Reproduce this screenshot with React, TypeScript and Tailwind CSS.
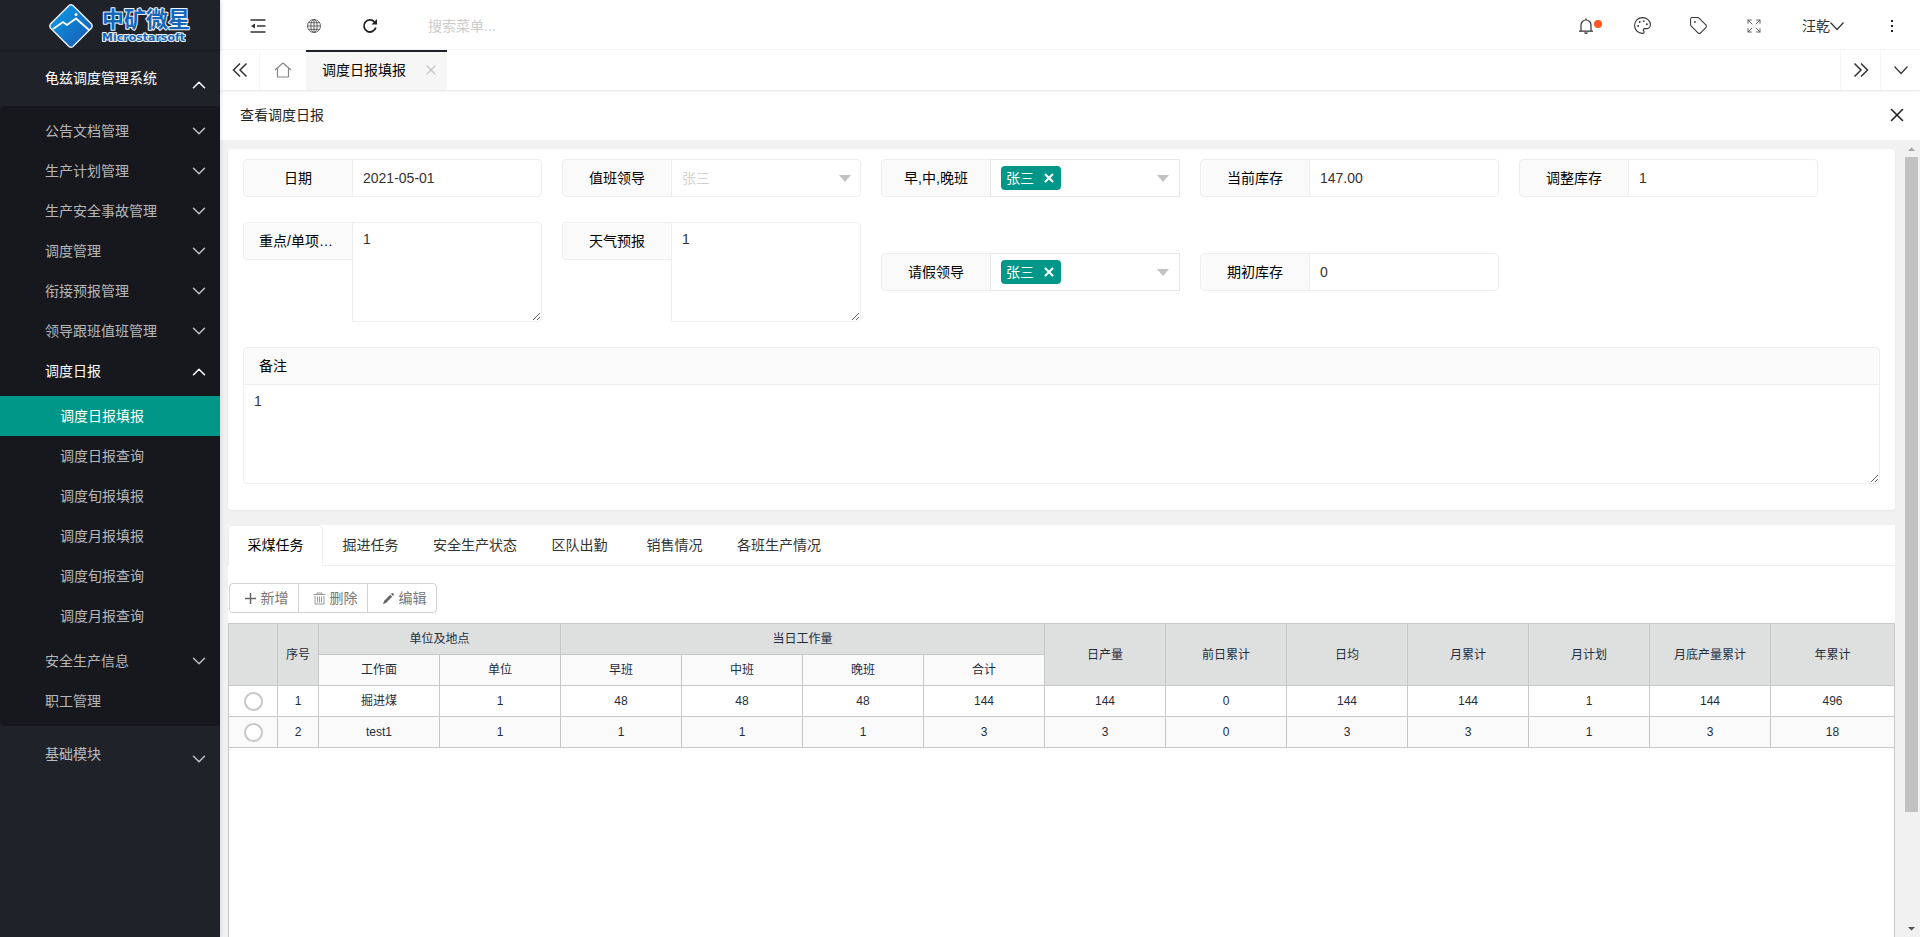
import { useState } from 'react'
import type { ReactNode } from 'react'
import { ChevronDown, ChevronUp, Expand, Palette, Tag, X } from 'lucide-react'

interface MenuItem {
  name: string
  arrow?: boolean
  children?: string[]
}

const MENU: MenuItem[] = [
  { name: '公告文档管理', arrow: true },
  { name: '生产计划管理', arrow: true },
  { name: '生产安全事故管理', arrow: true },
  { name: '调度管理', arrow: true },
  { name: '衔接预报管理', arrow: true },
  { name: '领导跟班值班管理', arrow: true },
  {
    name: '调度日报',
    arrow: true,
    children: [
      '调度日报填报',
      '调度日报查询',
      '调度旬报填报',
      '调度月报填报',
      '调度旬报查询',
      '调度月报查询',
    ],
  },
  { name: '安全生产信息', arrow: true },
  { name: '职工管理' },
]

const TABS = ['采煤任务', '掘进任务', '安全生产状态', '区队出勤', '销售情况', '各班生产情况']

const SUB_HEADS = ['工作面', '单位', '早班', '中班', '晚班', '合计']
const TALL_HEADS = ['日产量', '前日累计', '日均', '月累计', '月计划', '月底产量累计', '年累计']

const ROWS = [
  ['掘进煤', '1', '48', '48', '48', '144', '144', '0', '144', '144', '1', '144', '496'],
  ['test1', '1', '1', '1', '1', '3', '3', '0', '3', '3', '1', '3', '18'],
]

function Logo() {
  return (
    <svg width="150" height="48" viewBox="0 0 150 48" role="img" aria-label="中矿微星">
      <defs>
        <linearGradient id="logoFill" x1="0" y1="0" x2="1" y2="1">
          <stop offset="0" stopColor="#08a0ea" />
          <stop offset="1" stopColor="#1b55b0" />
        </linearGradient>
      </defs>
      <path
        d="M24 4.5 Q26 3 28 4.5 L46.5 23 Q48 25 46.5 27 L28 45.5 Q26 47 24 45.5 L5.5 27 Q4 25 5.5 23 Z"
        fill="url(#logoFill)"
        stroke="#e8eef5"
        strokeWidth="1.5"
      />
      <path
        d="M8 28 L18 21 L22 24 L31 17.500 L44 29"
        fill="none"
        stroke="#fff"
        strokeWidth="1.8"
      />
      <circle cx="31" cy="13.5" r="1.5" fill="#fff" />
      <text
        x="57"
        y="26"
        fontSize="22"
        fontWeight="700"
        fill="#1565b8"
        stroke="#f2f6fa"
        strokeWidth="2"
        strokeLinejoin="round"
        paintOrder="stroke"
        fontFamily="'Noto Sans CJK SC', sans-serif"
      >
        中矿微星
      </text>
      <text
        x="57"
        y="40"
        fontSize="11"
        fontWeight="700"
        fill="#1565b8"
        stroke="#f2f6fa"
        strokeWidth="2"
        strokeLinejoin="round"
        paintOrder="stroke"
        fontFamily="'DejaVu Sans', sans-serif"
      >
        Microstarsoft
      </text>
    </svg>
  )
}

function ShrinkIcon() {
  return (
    <svg width="16" height="16" viewBox="0 0 16 16" fill="none" stroke="#333" strokeWidth="1.5">
      <path d="M0.5 2H15.5M7 8H15.5M0.5 14H15.5" />
      <path d="M1 8L5 5.5V10.5Z" fill="#333" stroke="none" />
    </svg>
  )
}

function GlobeIcon() {
  return (
    <svg width="16" height="16" viewBox="0 0 16 16" fill="none" stroke="#555" strokeWidth="0.9">
      <circle cx="8" cy="8" r="6.5" />
      <ellipse cx="8" cy="8" rx="3.2" ry="6.5" />
      <path d="M8 1.5V14.5M1.5 8H14.5M2.5 4.7H13.5M2.5 11.3H13.5" />
    </svg>
  )
}

function ReloadIcon() {
  return (
    <svg width="16" height="16" viewBox="0 0 16 16" fill="none" stroke="#222" strokeWidth="1.8">
      <path d="M13.8 9.5A6 6 0 1 1 12.5 4" />
      <path d="M15 1V6.5H9.5Z" fill="#222" stroke="none" />
    </svg>
  )
}

function BellIcon() {
  return (
    <svg width="16" height="16" viewBox="0 0 16 16" fill="none" stroke="#333" strokeWidth="1.2">
      <path d="M3 13V7A5 5 0 0 1 13 7V13" />
      <path d="M1 13.2H15M6.5 14.5Q8 16 9.5 14.5M8 2V0.5" />
    </svg>
  )
}

function HomeIcon() {
  return (
    <svg width="18" height="18" viewBox="0 0 18 18" fill="none" stroke="#888" strokeWidth="1.2">
      <path d="M1 9L9 2L17 9M3.5 7.5V16H14.5V7.5" strokeLinejoin="round" />
    </svg>
  )
}

function DoubleArrow({ dir }: { dir: 'left' | 'right' }) {
  return (
    <svg width="16" height="16" viewBox="0 0 16 16" fill="none" stroke="#333" strokeWidth="1.5">
      {dir === 'left' ? (
        <path d="M8 1.5L1.5 8L8 14.5M14.5 1.5L8 8L14.5 14.5" />
      ) : (
        <path d="M1.5 1.5L8 8L1.5 14.5M8 1.5L14.5 8L8 14.5" />
      )}
    </svg>
  )
}

function WideArrow() {
  return (
    <svg width="14" height="14" viewBox="0 0 14 14" fill="none" stroke="#333" strokeWidth="1.2">
      <path d="M0.5 3.5L7 10.5L13.5 3.5" />
    </svg>
  )
}

function Caret() {
  return (
    <svg
      className="pointer-events-none shrink-0"
      width="12"
      height="7"
      viewBox="0 0 12 7"
      fill="#c2c2c2"
    >
      <path d="M0 0H12L6 7Z" />
    </svg>
  )
}

function Sidebar() {
  const [active, setActive] = useState('调度日报填报')

  return (
    <nav className="relative z-10 flex w-[220px] shrink-0 flex-col bg-[#20222a] text-white/70 shadow-[1px_0_4px_rgba(0,0,0,0.1)]">
      <div className="flex h-[50px] items-center pl-[45px] shadow-[0_1px_2px_rgba(0,0,0,0.15)]">
        <Logo />
      </div>
      <button className="flex h-14 items-center justify-between pr-2.5 pl-[45px] text-white">
        龟兹调度管理系统
        <ChevronUp size={22} strokeWidth={1.7} className="mt-3.5" />
      </button>
      <ul className="rounded-sm bg-[#16181d] py-[5px]">
        {MENU.map((item) => (
          <li key={item.name}>
            <button
              className={`flex h-10 w-full items-center justify-between pr-2.5 pl-[45px] ${
                item.children ? 'text-white' : ''
              }`}
            >
              {item.name}
              {item.arrow &&
                (item.children ? (
                  <ChevronUp size={22} strokeWidth={1.7} className="mt-0.5" />
                ) : (
                  <ChevronDown size={22} strokeWidth={1.7} />
                ))}
            </button>
            {item.children && (
              <ul className="py-[5px]">
                {item.children.map((child) => (
                  <li key={child}>
                    <a
                      href="#"
                      onClick={() => setActive(child)}
                      className={`flex h-10 items-center pl-[60px] ${
                        child === active ? 'bg-[#009688] text-white' : ''
                      }`}
                    >
                      {child}
                    </a>
                  </li>
                ))}
              </ul>
            )}
          </li>
        ))}
      </ul>
      <button className="flex h-14 items-center justify-between pr-2.5 pl-[45px]">
        基础模块
        <ChevronDown size={22} strokeWidth={1.7} className="mt-2.5" />
      </button>
    </nav>
  )
}

function TopButton({ label, children }: { label: string; children: ReactNode }) {
  return (
    <button aria-label={label} className="flex h-full w-14 items-center justify-center text-[#333]">
      {children}
    </button>
  )
}

function Header() {
  return (
    <header className="flex h-[50px] items-center justify-between border-b border-[#f6f6f6] bg-white">
      <div className="flex h-full items-center pt-0.5 pl-2.5">
        <TopButton label="侧边伸缩">
          <ShrinkIcon />
        </TopButton>
        <TopButton label="前台">
          <GlobeIcon />
        </TopButton>
        <TopButton label="刷新">
          <ReloadIcon />
        </TopButton>
        <input
          aria-label="搜索菜单"
          placeholder="搜索菜单..."
          className="ml-[30px] w-40 outline-none placeholder:text-[#ccc]"
        />
      </div>
      <div className="flex h-full items-center pt-0.5">
        <button aria-label="消息" className="relative flex h-full w-14 items-center justify-center">
          <BellIcon />
          <span className="absolute top-[18px] left-9 size-2 rounded-full bg-[#ff5722]" />
        </button>
        <TopButton label="主题">
          <Palette size={19} strokeWidth={1.4} />
        </TopButton>
        <TopButton label="便签">
          <Tag size={19} strokeWidth={1.3} />
        </TopButton>
        <TopButton label="全屏">
          <Expand size={16} strokeWidth={1.4} className="text-[#555]" />
        </TopButton>
        <button className="flex h-full items-center px-5">
          汪乾
          <WideArrow />
        </button>
        <button
          aria-label="更多"
          className="flex h-full w-14 flex-col items-center justify-center gap-[3px]"
        >
          <i className="size-0.5 bg-[#222]" />
          <i className="size-0.5 bg-[#222]" />
          <i className="size-0.5 bg-[#222]" />
        </button>
      </div>
    </header>
  )
}

function PageTabs() {
  return (
    <div className="relative z-[5] flex h-10 bg-white shadow-[0_1px_2px_rgba(0,0,0,0.1)]">
      <button
        aria-label="向左"
        className="flex w-10 items-center justify-center border-r border-[#f6f6f6]"
      >
        <DoubleArrow dir="left" />
      </button>
      <button aria-label="首页" className="flex w-[46px] items-center justify-center">
        <HomeIcon />
      </button>
      <div className="flex w-[141px] items-center justify-between border-t-2 border-[#20222a] bg-[#f6f6f6] pr-2 pb-0.5 pl-4 text-black">
        <a href="#">调度日报填报</a>
        <button aria-label="关闭标签" className="text-[#c2c2c2]">
          <X size={16} strokeWidth={1.7} />
        </button>
      </div>
      <div className="flex-1" />
      <button
        aria-label="向右"
        className="flex w-10 items-center justify-center border-l border-[#f6f6f6]"
      >
        <DoubleArrow dir="right" />
      </button>
      <button
        aria-label="标签操作"
        className="flex w-10 items-center justify-center border-l border-[#f6f6f6]"
      >
        <WideArrow />
      </button>
    </div>
  )
}

const LABEL =
  'block h-[38px] w-[110px] shrink-0 truncate rounded-l-sm border border-[#eee] bg-[#fafafa] px-[15px] text-center leading-9 text-black'
const FIELD = '-ml-px w-[190px] rounded-r-sm border border-[#eee] bg-white px-2.5 outline-none'

function TextField({ id, label, value }: { id: string; label: string; value: string }) {
  return (
    <div className="flex">
      <label htmlFor={id} className={LABEL}>
        {label}
      </label>
      <input id={id} defaultValue={value} className={`${FIELD} h-[38px]`} />
    </div>
  )
}

function AreaField({ id, label, value }: { id: string; label: string; value: string }) {
  return (
    <div className="flex items-start">
      <label htmlFor={id} className={LABEL}>
        {label}
      </label>
      <textarea id={id} defaultValue={value} className={`${FIELD} h-[100px] resize py-1`} />
    </div>
  )
}

function MultiField({ id, label, value }: { id: string; label: string; value: string }) {
  return (
    <div className="flex">
      <span id={id} className={LABEL}>
        {label}
      </span>
      <div
        role="group"
        aria-labelledby={id}
        className="-ml-px flex h-[38px] w-[190px] items-center justify-between border border-[#e6e6e6] bg-white px-2.5"
      >
        <span className="flex h-6 w-[60px] items-center justify-between rounded-sm bg-[#009688] px-[5px] text-white">
          {value}
          <button aria-label="移除">
            <X size={14} strokeWidth={3.5} />
          </button>
        </span>
        <Caret />
      </div>
    </div>
  )
}

function ReportForm() {
  return (
    <form className="flex flex-col gap-[25px] rounded-sm bg-white px-[15px] pt-2.5 pb-[26px] shadow-[0_1px_2px_rgba(0,0,0,0.05)]">
      <div className="flex flex-wrap gap-5">
        <TextField id="date" label="日期" value="2021-05-01" />
        <div className="flex">
          <label htmlFor="leader" className={LABEL}>
            值班领导
          </label>
          <div className="relative">
            <select
              id="leader"
              disabled
              className={`${FIELD} h-[38px] appearance-none text-[#d2d2d2] opacity-100`}
            >
              <option>张三</option>
            </select>
            <span className="pointer-events-none absolute inset-y-0 right-2.5 flex items-center">
              <Caret />
            </span>
          </div>
        </div>
        <MultiField id="shifts" label="早,中,晚班" value="张三" />
        <TextField id="stock" label="当前库存" value="147.00" />
        <TextField id="adjust" label="调整库存" value="1" />
      </div>
      <div className="flex flex-wrap items-center gap-5">
        <AreaField id="focus" label="重点/单项工程" value="1" />
        <AreaField id="weather" label="天气预报" value="1" />
        <MultiField id="leave" label="请假领导" value="张三" />
        <TextField id="initial" label="期初库存" value="0" />
      </div>
      <div className="flex flex-col">
        <label
          htmlFor="remark"
          className="h-[38px] rounded-t-sm border border-[#eee] bg-[#fafafa] px-[15px] leading-9 text-black"
        >
          备注
        </label>
        <textarea
          id="remark"
          defaultValue="1"
          className="-mt-px h-[100px] resize rounded-b-sm border border-[#eee] px-2.5 py-1 outline-none"
        />
      </div>
    </form>
  )
}

function Toolbar() {
  const button =
    'flex h-[30px] w-[70px] items-center justify-center gap-1 border border-[#d2d2d2] pl-1 text-[#777]'
  return (
    <div className="mt-[17px] ml-px flex">
      <button className={`${button} rounded-l-sm`}>
        <svg width="13" height="13" viewBox="0 0 13 13" stroke="#666" strokeWidth="1.5">
          <path d="M6.5 1V12M1 6.5H12" />
        </svg>
        新增
      </button>
      <button className={`${button} -ml-px`}>
        <svg width="13" height="13" viewBox="0 0 13 13" fill="none" stroke="#999">
          <path d="M0.5 2.5H12.5M4 2.5V1H9V2.5M2 4V12H11V4M4.5 4.5V10.5M6.5 4.5V10.5M8.5 4.5V10.5" />
        </svg>
        删除
      </button>
      <button className={`${button} -ml-px rounded-r-sm`}>
        <svg width="13" height="13" viewBox="0 0 13 13" fill="#666">
          <path d="M1 12L2 9L8.2 2.8L10.2 4.8L4 11ZM9 2L10 1Q10.5 0.8 11 1.2L11.8 2Q12.2 2.5 11.8 3L11 4Z" />
        </svg>
        编辑
      </button>
    </div>
  )
}

function ReportTable() {
  const cell = 'h-[31px] border border-[#c8c8c8] p-0 text-center font-normal'
  return (
    <div className="mt-2.5 flex-1 border-x border-[#c8c8c8]">
      <table className="-mx-px w-[calc(100%+2px)] table-fixed border-collapse text-xs text-[#1f2d3d]">
        <colgroup>
          <col className="w-[49px]" />
          <col className="w-[41px]" />
          {ROWS[0].slice(1).map((_, i) => (
            <col key={i} className="w-[121px]" />
          ))}
          <col />
        </colgroup>
        <thead className="bg-[#dee0df]">
          <tr>
            <th rowSpan={2} className={cell} aria-label="选择" />
            <th rowSpan={2} className={cell}>
              序号
            </th>
            <th colSpan={2} className={cell}>
              单位及地点
            </th>
            <th colSpan={4} className={cell}>
              当日工作量
            </th>
            {TALL_HEADS.map((head) => (
              <th key={head} rowSpan={2} className={cell}>
                {head}
              </th>
            ))}
          </tr>
          <tr className="bg-[#fafafa]">
            {SUB_HEADS.map((head) => (
              <th key={head} className={cell}>
                {head}
              </th>
            ))}
          </tr>
        </thead>
        <tbody>
          {ROWS.map((row, index) => (
            <tr key={row[0]} className="even:bg-[#fafafa]">
              <td className={cell}>
                <input
                  type="radio"
                  name="row"
                  aria-label={row[0]}
                  className="mx-auto block size-[19px] appearance-none rounded-full border-2 border-[#c8c8c8] bg-white checked:border-[#009688]"
                />
              </td>
              <td className={cell}>{index + 1}</td>
              {row.map((value, i) => (
                <td key={i} className={cell}>
                  {value}
                </td>
              ))}
            </tr>
          ))}
        </tbody>
      </table>
    </div>
  )
}

function TaskPanel() {
  const [tab, setTab] = useState(TABS[0])

  return (
    <section className="mt-[15px] flex flex-1 flex-col bg-white">
      <div role="tablist" className="flex h-[41px] border-b border-[#eee]">
        {TABS.map((name) => (
          <button
            key={name}
            role="tab"
            aria-selected={name === tab}
            onClick={() => setTab(name)}
            className={`h-[41px] min-w-[95px] px-[15px] pb-0.5 ${
              name === tab
                ? 'rounded-t-sm border border-[#eee] border-b-white bg-white text-black'
                : ''
            }`}
          >
            {name}
          </button>
        ))}
      </div>
      <Toolbar />
      <ReportTable />
    </section>
  )
}

function ScrollTrack() {
  return (
    <div aria-hidden="true" className="flex w-[17px] shrink-0 flex-col items-center bg-[#f1f1f1]">
      <svg width="17" height="17" viewBox="0 0 17 17" fill="#a3a3a3">
        <path d="M5 11H12L8.5 7.5Z" />
      </svg>
      <div className="w-[13px] flex-[654] bg-[#c1c1c1]" />
      <div className="flex-[108]" />
      <svg width="17" height="17" viewBox="0 0 17 17" fill="#505050">
        <path d="M5 7H12L8.5 10.5Z" />
      </svg>
    </div>
  )
}

export default function App() {
  return (
    <div className="flex h-screen overflow-hidden bg-[#f1f1f1] font-['Liberation_Sans','Noto_Sans_CJK_SC',sans-serif] text-sm leading-6 text-[#333]">
      <Sidebar />
      <div className="flex min-w-0 flex-1 flex-col">
        <Header />
        <PageTabs />
        <div className="flex h-[50px] shrink-0 items-center justify-between bg-white px-5 text-[#222]">
          <h1>查看调度日报</h1>
          <button aria-label="关闭" className="-mr-2">
            <X size={22} strokeWidth={1.7} />
          </button>
        </div>
        <div className="flex min-h-0 flex-1">
          <main className="flex min-w-0 flex-1 flex-col overflow-y-auto px-2 pt-[9px] [scrollbar-width:none]">
            <ReportForm />
            <TaskPanel />
          </main>
          <ScrollTrack />
        </div>
      </div>
    </div>
  )
}
